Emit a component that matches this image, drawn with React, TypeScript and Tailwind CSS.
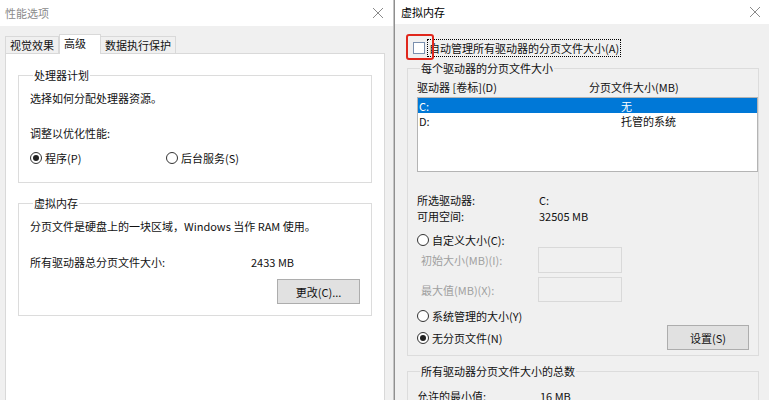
import React from "react";

const font = "font-['Noto_Sans_CJK_SC','Noto_Sans',sans-serif]";

function CloseIcon() {
  return (
    <svg width="12" height="12" viewBox="0 0 12 12" className="text-[#8a8a8a]">
      <path d="M1 1 L11 11 M11 1 L1 11" stroke="currentColor" strokeWidth="1" fill="none" />
    </svg>
  );
}

function Radio({ checked, label }: { checked?: boolean; label: React.ReactNode }) {
  return (
    <div className="flex items-center h-[14px]">
      <span className="w-[12px] h-[12px] rounded-full border border-[#333] bg-white flex items-center justify-center">
        {checked && <span className="w-[6px] h-[6px] rounded-full bg-[#222]" />}
      </span>
      <span className="ml-[3px] leading-[14px]">{label}</span>
    </div>
  );
}

function Group({
  label,
  className,
  children,
}: {
  label: string;
  className: string;
  children: React.ReactNode;
}) {
  return (
    <fieldset className={"border border-[#dcdcdc] " + className}>
      <legend className="ml-[3px] px-[1px] leading-[14px]">{label}</legend>
      {children}
    </fieldset>
  );
}

function Button({ children, className }: { children: React.ReactNode; className: string }) {
  return (
    <div
      className={
        "h-[25px] border border-[#adadad] bg-[#e1e1e1] flex items-center justify-center leading-[14px] " +
        className
      }
    >
      {children}
    </div>
  );
}

function PerformanceOptions() {
  return (
    <div className="w-[393px] h-full flex flex-col bg-[#f0f0f0]">
      {/* title bar */}
      <div className="h-[26px] shrink-0 bg-white flex items-center justify-between pl-[5px] pr-[9px]">
        <span className="text-[#8a8a8a] leading-[14px]">性能选项</span>
        <CloseIcon />
      </div>

      {/* tabs */}
      <div className="flex shrink-0 items-end pl-[5px] pt-[7px] h-[27px]">
        <div className="h-[17px] px-[4px] border border-[#d9d9d9] border-b-0 bg-[#f0f0f0] flex items-center leading-[14px]">
          视觉效果
        </div>
        <div className="h-[20px] w-[42px] pl-[4px] border border-[#d9d9d9] border-b-0 bg-white flex items-start pt-[1px] leading-[14px] relative top-[1px] z-10">
          高级
        </div>
        <div className="h-[17px] px-[4px] border border-[#d9d9d9] border-b-0 border-l-0 bg-[#f0f0f0] flex items-center leading-[14px]">
          数据执行保护
        </div>
      </div>

      {/* tab panel */}
      <div className="ml-[5px] w-[380px] flex-1 bg-white border border-[#d9d9d9] border-b-0 px-[12px]">
        <Group label="处理器计划" className="mt-[14px] pl-[11px] pb-[17px]">
          <div className="mt-[9px] leading-[14px]">选择如何分配处理器资源。</div>
          <div className="mt-[21px] leading-[14px]">调整以优化性能:</div>
          <div className="mt-[11px] flex">
            <div className="w-[136px]">
              <Radio checked label="程序(P)" />
            </div>
            <Radio label="后台服务(S)" />
          </div>
        </Group>

        <Group label="虚拟内存" className="mt-[13px] pl-[11px] pr-[11px] pb-[11px]">
          <div className="mt-[9px] leading-[14px]">分页文件是硬盘上的一块区域，Windows 当作 RAM 使用。</div>
          <div className="mt-[22px] flex leading-[14px]">
            <span className="w-[221px]">所有驱动器总分页文件大小:</span>
            <span>2433 MB</span>
          </div>
          <div className="mt-[10px] flex justify-end">
            <Button className="w-[83px]">更改(C)...</Button>
          </div>
        </Group>
      </div>
    </div>
  );
}

function VirtualMemory() {
  return (
    <div className="flex-1 h-full flex flex-col bg-[#f0f0f0]">
      {/* title bar */}
      <div className="h-[24px] shrink-0 bg-white flex items-center justify-between pl-[6px] pr-[8px]">
        <span className="text-black leading-[14px]">虚拟内存</span>
        <CloseIcon />
      </div>

      <div className="shrink-0 pl-[12px] pr-[10px]">
        {/* auto manage checkbox */}
        <div className="mt-[15px] h-[18px] flex items-center relative">
          <span className="ml-[6px] w-[12px] h-[12px] border border-[#7a8fae] bg-white" />
          <span className="ml-[2px] h-[18px] px-[1px] border border-dotted border-black flex items-center leading-[14px]">
            自动管理所有驱动器的分页文件大小(A)
          </span>
          <span className="absolute left-[-1px] top-[-5px] w-[28px] h-[26px] border-2 border-[#e0271c] rounded-[3px]" />
        </div>

        <Group label="每个驱动器的分页文件大小" className="mt-[4px] pl-[9px] pb-[5px]">
          <div className="mt-[5px] flex leading-[14px]">
            <span className="w-[172px]">驱动器 [卷标](D)</span>
            <span>分页文件大小(MB)</span>
          </div>
          <div className="mt-[3px] h-[75px] border border-[#b4b4b4] bg-white">
            <div className="h-[15px] bg-[#0078d7] text-white flex items-center leading-[14px]">
              <span className="w-[203px] pl-[1px]">C:</span>
              <span>无</span>
            </div>
            <div className="h-[15px] flex items-center leading-[14px]">
              <span className="w-[203px] pl-[1px]">D:</span>
              <span>托管的系统</span>
            </div>
          </div>

          <div className="mt-[20px] flex leading-[16px]">
            <span className="w-[122px]">所选驱动器:</span>
            <span>C:</span>
          </div>
          <div className="flex leading-[16px]">
            <span className="w-[122px]">可用空间:</span>
            <span>32505 MB</span>
          </div>

          <div className="mt-[9px]">
            <Radio label="自定义大小(C):" />
          </div>
          <div className="flex items-center">
            <span className="w-[121px] pl-[4px] text-[#a0a0a0] leading-[14px]">初始大小(MB)(I):</span>
            <span className="w-[84px] h-[26px] border border-[#d9d9d9]" />
          </div>
          <div className="mt-[4px] flex items-center">
            <span className="w-[121px] pl-[4px] text-[#a0a0a0] leading-[14px]">最大值(MB)(X):</span>
            <span className="w-[84px] h-[25px] border border-[#d9d9d9]" />
          </div>

          <div className="mt-[7px]">
            <Radio label="系统管理的大小(Y)" />
          </div>
          <div className="mt-[2px] h-[25px] flex items-center justify-between pr-[9px]">
            <Radio checked label="无分页文件(N)" />
            <Button className="w-[82px]">设置(S)</Button>
          </div>
        </Group>

        <Group label="所有驱动器分页文件大小的总数" className="mt-[8px] pl-[9px] pb-[20px]">
          <div className="mt-[11px] flex leading-[14px]">
            <span className="w-[123px]">允许的最小值:</span>
            <span>16 MB</span>
          </div>
        </Group>
      </div>
    </div>
  );
}

export default function App() {
  return (
    <div className={"w-[769px] h-[400px] overflow-hidden flex text-[11px] text-[#111] bg-[#f0f0f0] " + font}>
      <PerformanceOptions />
      <div className="w-[1px] h-full bg-[#c4c4c4]" />
      <div className="w-[1px] h-full bg-[#8f8f8f]" />
      <VirtualMemory />
    </div>
  );
}
